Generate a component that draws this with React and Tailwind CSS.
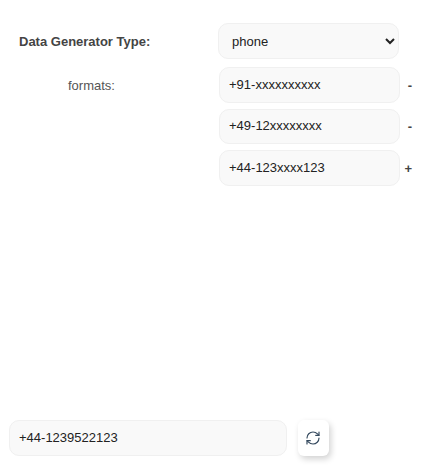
import { RefreshCw } from "lucide-react";

const font = "font-['Liberation_Sans',Arial,sans-serif]";
const inputCls =
  "h-[35.5px] w-[181px] rounded-[10px] border border-[#f0f0f0] bg-[#f9f9f9] px-[9px] pb-[1px] text-[13px] text-[#222] outline-none";

function FormatRow({ value, sign, first }) {
  return (
    <div className="flex items-center">
      <div className="w-[219px] pl-[68px] pt-[2px] text-[13px] text-[#555]">{first ? "formats:" : ""}</div>
      <input className={inputCls} defaultValue={value} />
      <span className="w-3 pt-[1px] text-right text-[13px] font-bold text-[#444]">{sign}</span>
    </div>
  );
}

export default function App() {
  return (
    <div className={`${font} flex h-[474px] w-[424px] flex-col justify-between bg-white pb-[18px] pt-[23px]`}>
      <div className="flex flex-col gap-[6px]">
        <div className="mb-[2px] flex items-center">
          <label className="w-[218px] pl-[19px] pt-[2px] text-[13px] font-bold text-[#444]">Data Generator Type:</label>
          <select
            defaultValue="phone"
            className="h-9 w-[181px] rounded-[10px] border border-[#f0f0f0] bg-[#f9f9f9] pl-[9px] pr-[4px] text-[13px] text-[#222] outline-none"
          >
            <option value="phone">phone</option>
          </select>
        </div>
        <FormatRow value="+91-xxxxxxxxxx" sign="-" first />
        <FormatRow value="+49-12xxxxxxxx" sign="-" />
        <FormatRow value="+44-123xxxx123" sign="+" />
      </div>
      <div className="flex items-center pl-[9px]">
        <input
          className="h-9 w-[278px] rounded-[10px] border border-[#f0f0f0] bg-[#f9f9f9] px-[9px] pb-[2px] text-[13px] text-[#222] outline-none"
          defaultValue="+44-1239522123"
        />
        <button className="ml-[11px] flex h-9 w-[31px] items-center justify-center rounded-md bg-white pr-[2px] shadow-[2px_3px_6px_rgba(0,0,0,0.18)]">
          <RefreshCw size={16} strokeWidth={1.75} className="text-[#34495e]" />
        </button>
      </div>
    </div>
  );
}
